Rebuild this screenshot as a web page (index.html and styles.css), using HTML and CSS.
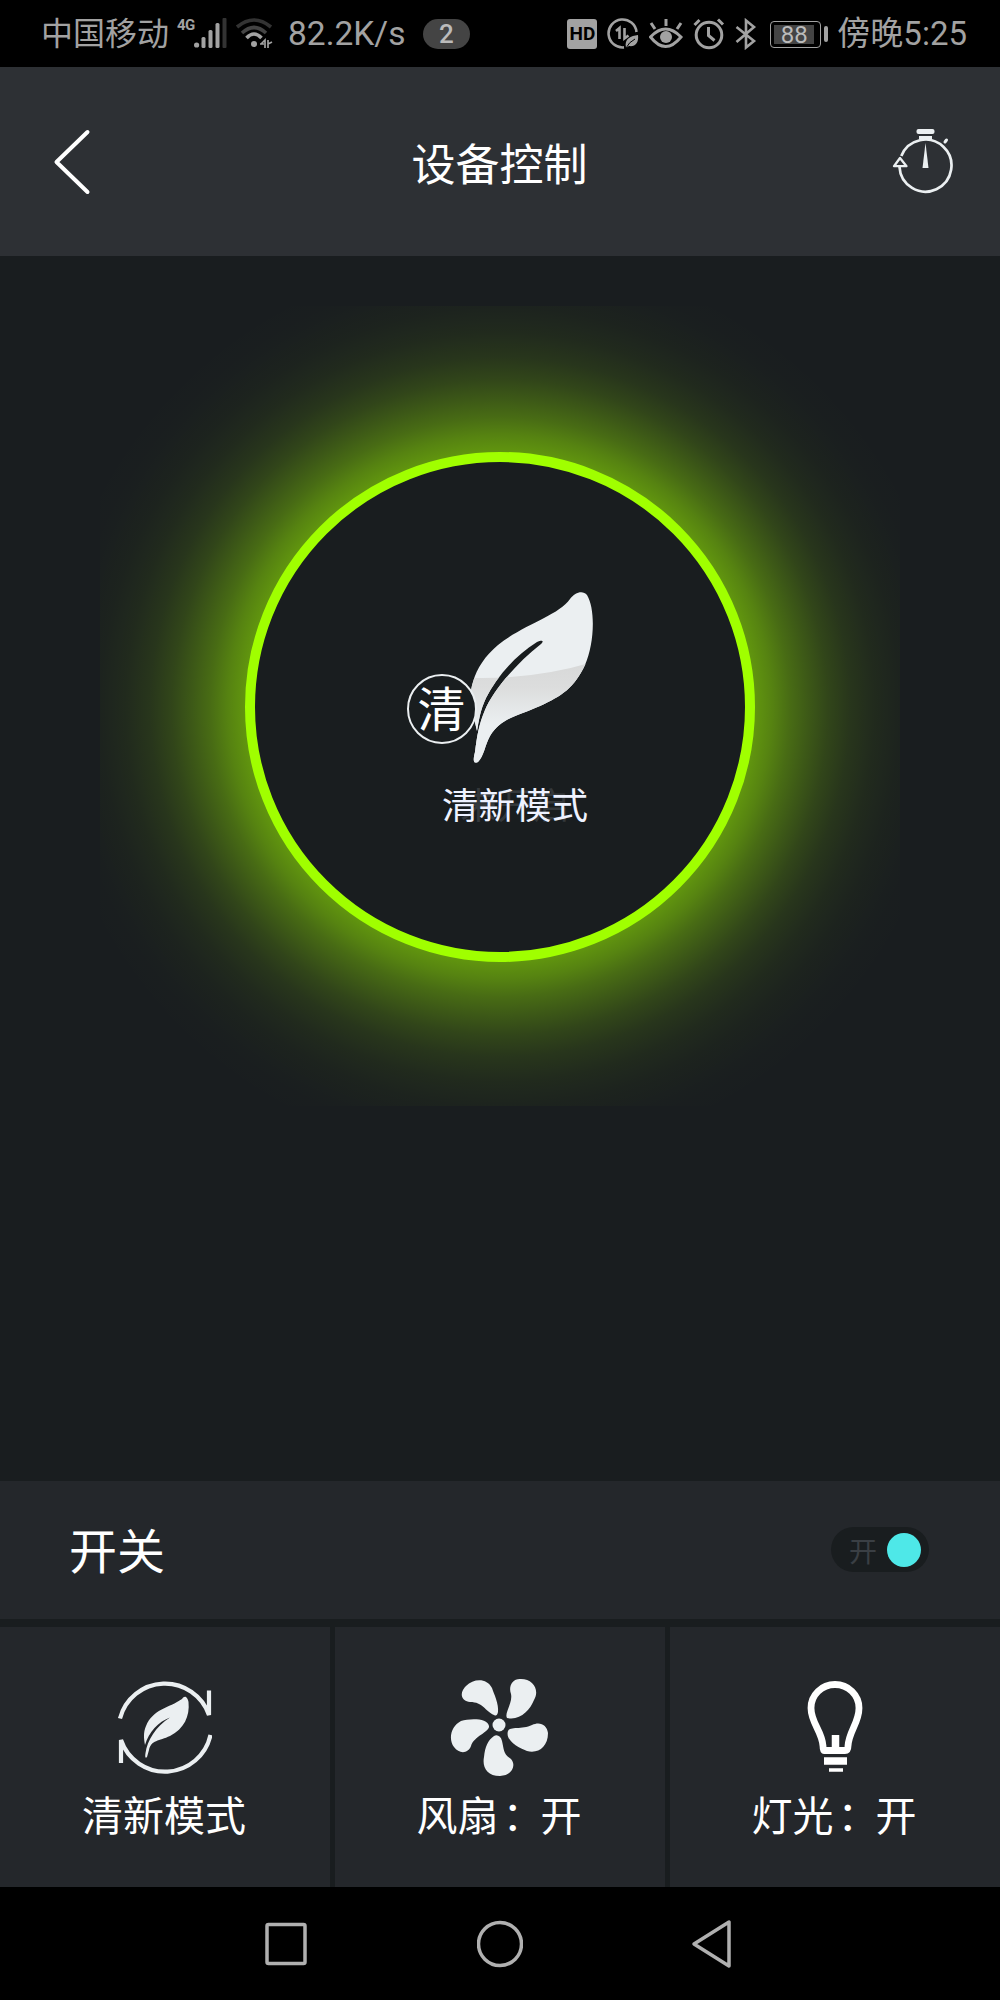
FILE: index.html
```html
<!DOCTYPE html>
<html lang="zh-CN">
  <head>
    <meta charset="UTF-8" />
    <meta name="viewport" content="width=device-width, initial-scale=1.0" />
    <title>设备控制</title>
    <link rel="stylesheet" href="styles.css">
  </head>
  <body>
    <div class="status-bar">
      <div class="status-left">
        <span class="carrier">中国移动</span>
        <span class="network">4G</span>
        <svg class="signal" width="34" height="34" viewBox="17 0 34 34" fill="#a2a2a2">
          <circle cx="19.600" cy="28" r="2.600" />
          <rect x="24.500" y="20" width="4" height="11" rx="1.500" />
          <rect x="31.500" y="13" width="4" height="18" rx="1.500" />
          <rect x="38.500" y="6" width="4" height="25" rx="1.500" />
          <rect x="45.500" y="1" width="4" height="30" rx="1" fill="#333" />
        </svg>
        <svg class="wifi" width="38" height="32" viewBox="0 0 38 32" fill="none" stroke-width="3.600">
          <path d="M2 9Q19 -5 36 9" stroke="#333" />
          <path d="M7 15Q19 4 31 15" stroke="#444" />
          <path d="M11.500 20Q19 12 26.500 20" stroke="#a2a2a2" />
          <circle cx="19" cy="26" r="3" fill="#a2a2a2" />
          <path d="M25 26h4M30 30v-8l-4 4M33 22v8M33 26l4-2" stroke="#a2a2a2" stroke-width="1.700" />
        </svg>
        <span class="speed">82.2K/s</span>
        <span class="notice-count">2</span>
      </div>
      <div class="status-right">
        <span class="hd">HD</span>
        <svg width="32" height="32" viewBox="0 0 32 32" fill="none" stroke="#a2a2a2" stroke-width="2.600">
          <path d="M29.500 14A14 14 0 1 0 17 29.400" />
          <path d="M9 13l3.500-3v11M17.500 10v10.500l4-3" />
          <path d="M19 30c-2-10 5-12 12-13c1 8-3 12-9 11z" fill="#a2a2a2" stroke="none" />
          <path d="M19 30q3-6 9-9" stroke="#000" stroke-width="1" />
        </svg>
        <svg width="34" height="32" viewBox="0 0 34 32" fill="none" stroke="#a2a2a2" stroke-width="3">
          <path d="M1.500 19Q16.500 3 32 19Q16.500 38 1.500 19z" />
          <circle cx="17" cy="19" r="6" fill="#a2a2a2" stroke="none" />
          <path d="M17 1v7M2 5l4 6M32 5l-4 6" />
        </svg>
        <svg width="32" height="32" viewBox="0 0 32 32" fill="none" stroke="#a2a2a2" stroke-width="3">
          <circle cx="16" cy="17" r="12.800" />
          <path d="M15.500 9v8.500l6 5M1.500 7l5-5M25 1.500l5 5" />
        </svg>
        <svg width="22" height="32" viewBox="0 0 22 32" fill="none" stroke="#a2a2a2" stroke-width="2.600">
          <path d="M1.500 9L19 23l-8 6.500v-27L19 9L1.500 24" />
        </svg>
        <div class="battery"><span>88</span></div>
        <span class="clock">傍晚5:25</span>
      </div>
    </div>

    <header class="header">
      <button class="icon-btn back" aria-label="返回">
        <svg width="38" height="66" viewBox="0 0 38 66" fill="none" stroke="#fff" stroke-width="4" stroke-linecap="round" stroke-linejoin="round">
          <path d="M34.500 3L3.500 33l31 30" />
        </svg>
      </button>
      <h1>设备控制</h1>
      <button class="icon-btn" aria-label="定时">
        <svg width="62" height="66" viewBox="0 0 62 66" fill="none" stroke="#ebeff1" stroke-width="2.700">
          <path d="M9.300 27A26 26 0 1 1 7.500 38" />
          <path d="M2 37.200L8 29L14.500 37.200z" stroke-width="2.300" stroke-linejoin="round" />
          <path d="M53 13l1.500-2" stroke-width="3" stroke-linecap="round" />
          <path d="M33.500 14l3 25h-6z" fill="#ebeff1" stroke="none" />
          <rect x="24.500" y="0" width="18" height="5" rx="2" fill="#ebeff1" stroke="none" />
          <rect x="27" y="7" width="13" height="3" fill="#ebeff1" stroke="none" />
        </svg>
      </button>
    </header>

    <main class="stage">
      <div class="glow">
        <div class="ring">
          <svg class="leaf" width="192" height="176" viewBox="0 0 192 176">
            <defs>
              <linearGradient id="shade" x1="0" y1="0" x2="0" y2="1">
                <stop offset="0" stop-color="#d7d8d8" />
                <stop offset="0.250" stop-color="#dcdddd" />
                <stop offset="0.600" stop-color="#ebeff1" />
              </linearGradient>
              <clipPath id="leafShape">
                <path d="M129 171C124 173 124 169 126 161C128 145 130 133 136 119C143 102 165 74 192 53C196 49 192 49 188 51C164 66 147 88 137 107C131 120 130 129 128 140C124 122 119 105 124 91C128 77 136 65 149 54C175 33 209 25 221 8C226 1 234 -1 238 4C247 19 245 54 236 74C225 97 213 105 191 115C166 126 152 127 141 145C136 154 135 165 129 171z" transform="translate(-55 0)" />
              </clipPath>
            </defs>
            <g clip-path="url(#leafShape)">
              <rect x="50" y="0" width="142" height="176" fill="#ebeff1" />
              <path d="M50 86Q124 91 192 70V176H50z" fill="url(#shade)" />
            </g>
            <circle cx="38" cy="118" r="34" fill="#191d1f" stroke="#ebeff1" stroke-width="2" />
            <text x="37.500" y="135.500" class="badge-text">清</text>
          </svg>
          <div class="mode">
            <span class="mode-prev">未开启</span>
            <span class="mode-name">清新模式</span>
          </div>
        </div>
      </div>
    </main>

    <section class="power">
      <span class="power-label">开关</span>
      <div class="toggle">
        <span>开</span>
        <i class="knob"></i>
      </div>
    </section>

    <section class="tiles">
      <div class="tile">
        <svg width="96" height="98" viewBox="-1 0 96 98" fill="none" stroke="#ebeff1" stroke-width="4.200">
          <path d="M3 40.500A46.500 46.500 0 0 1 92 37V12.500" />
          <path d="M93.500 57A46.500 46.500 0 0 1 4 62V85" />
          <path d="M30 79C28 81 28 78 28.500 75C30 63 39 48 53 39.500C41 44 32 54 28 67C27 61 26 55 29 48C36 31 52 30 65 21C68 16 71 20 71.500 24C73 38 67 51 53 58C42 63 34 62 32 72z" fill="#ebeff1" stroke="none" />
        </svg>
        <span>清新模式</span>
      </div>
      <div class="tile">
        <svg width="98" height="98" viewBox="0 0 98 98" fill="#ebeff1">
          <circle cx="49" cy="47" r="6.500" />
          <path d="M44 37C35 33 33 24 20 24C11 23 9 15 16 8C24 0 37 0 42 10C44 16 49 26 48 34C47 38 46 38 44 37z" />
          <path d="M57 40C54 35 63 25 61 16C58 8 63 0 71 1C83 1 90 12 84 22C80 32 70 43 57 40z" />
          <path d="M58 53C60 48 72 52 82 47C90 43 97 47 98 55C98 69 88 76 77 73C68 70 55 62 58 53z" />
          <path d="M44 58C47 56 51 58 52 63C54 71 53 76 61 81C67 88 61 98 50 98C37 98 32 89 34 79C35 69 38 62 44 58z" />
          <path d="M39 48C40 54 24 58 21 68C18 76 9 76 4 69C-2 61 1 48 11 43C20 40 38 40 39 48z" />
        </svg>
        <span>风扇<i class="colon">：</i>开</span>
      </div>
      <div class="tile">
        <svg width="58" height="98" viewBox="-1 -3 58 98" fill="none" stroke="#fff">
          <path d="M18 69.500H39Q42 69.500 42 65C43 50 53 42 53 27A24 23.500 0 0 0 5 27C5 42 16 50 17 65Q17 69.500 18 69.500z" stroke-width="6.800" />
          <path d="M29.500 54v15" stroke-width="7.500" />
          <path d="M18 80h23" stroke-width="7.500" />
          <path d="M23 89h14" stroke-width="3.500" />
        </svg>
        <span>灯光<i class="colon">：</i>开</span>
      </div>
    </section>

    <nav class="nav-bar">
      <svg width="46" height="46" viewBox="0 0 46 46"><rect x="4" y="3.500" width="38" height="39" rx="1.500" /></svg>
      <svg width="46" height="50" viewBox="0 0 46 50"><circle cx="23" cy="25" r="21.500" /></svg>
      <svg width="46" height="50" viewBox="0 0 46 50"><path d="M38 3v44L3 25z" stroke-linejoin="round" /></svg>
    </nav>
  </body>
</html>
```
FILE: styles.css
```css
* {
  box-sizing: border-box;
}

body {
  margin: 0;
  width: 1000px;
  height: 2000px;
  display: flex;
  flex-direction: column;
  background: #191d1f;
  color: #fff;
  font-family: Roboto, "Noto Sans CJK SC", sans-serif;
}

svg {
  display: block;
  flex: none;
}

.status-bar {
  height: 67px;
  padding: 1px 33px 0 41px;
  background: #000;
  color: #a2a2a2;
  display: flex;
  justify-content: space-between;
  align-items: center;
  font-size: 33px;
  line-height: 66px;
  white-space: nowrap;
}

.status-left,
.status-right {
  display: flex;
  align-items: center;
}

.carrier {
  width: 136px;
  font-size: 32px;
}

.network {
  width: 17px;
  margin-bottom: 18px;
  font-size: 15px;
  font-weight: bold;
  letter-spacing: -0.5px;
  line-height: 18px;
}

.wifi {
  margin-left: 7px;
}

.speed {
  margin-left: 15px;
  width: 118px;
  font-size: 33.5px;
}

.notice-count {
  margin-left: 17px;
  width: 47px;
  height: 30px;
  border-radius: 15px;
  background: #444;
  color: #bbb;
  font-size: 26px;
  font-weight: 500;
  line-height: 31px;
  text-align: center;
}

.status-right {
  gap: 10px;
}

.hd {
  width: 30px;
  height: 30px;
  border-radius: 3px;
  background: #a2a2a2;
  color: #000;
  font-size: 19px;
  font-weight: bold;
  line-height: 30px;
  text-align: center;
}

.battery {
  position: relative;
  width: 51px;
  height: 27px;
  margin: 0 6px 0 3px;
  padding: 3px 6px 3px 3px;
  border: 1.5px solid #a2a2a2;
  border-radius: 4px;
}

.battery::after {
  content: "";
  position: absolute;
  right: -8px;
  top: 4px;
  width: 4px;
  height: 16px;
  border-radius: 2px;
  background: #a2a2a2;
}

.battery span {
  display: block;
  height: 19px;
  background: #444;
  color: #bbb;
  font-size: 24px;
  line-height: 20px;
  text-align: center;
}

.header {
  height: 189px;
  padding: 0 46px 0 53px;
  background: #2d3034;
  display: flex;
  justify-content: space-between;
  align-items: center;
}

.header h1 {
  margin: 0;
  font-size: 44px;
  font-weight: 400;
}

.icon-btn {
  width: 62px;
  padding: 0;
  border: none;
  background: none;
}

.back {
  width: 54px;
}

.stage {
  height: 1225px;
  padding-top: 50px;
}

.glow {
  width: 800px;
  height: 800px;
  margin: 0 auto;
  padding-top: 2px;
  background: radial-gradient(
    circle 460px at 50% 401px,
    rgba(160, 255, 0, 0.54) 253px,
    rgba(160, 255, 0, 0.45) 272px,
    rgba(160, 255, 0, 0.35) 290px,
    rgba(160, 255, 0, 0.265) 308px,
    rgba(160, 255, 0, 0.18) 328px,
    rgba(160, 255, 0, 0.11) 350px,
    rgba(160, 255, 0, 0.06) 375px,
    rgba(160, 255, 0, 0.027) 400px,
    rgba(160, 255, 0, 0.008) 430px,
    rgba(160, 255, 0, 0) 460px
  );
  display: flex;
  justify-content: center;
  align-items: center;
}

.ring {
  width: 510px;
  height: 510px;
  border: 10px solid #a0ff00;
  border-radius: 50%;
  background: #191d1f;
  display: flex;
  flex-direction: column;
  align-items: center;
  padding-top: 129px;
}

.badge-text {
  fill: #fff;
  font-size: 48px;
  text-anchor: middle;
}

.mode {
  display: grid;
  margin: 13px 0 0 30px;
  font-size: 36.5px;
  line-height: 54px;
}

.mode span {
  grid-area: 1 / 1;
  text-align: center;
}

.mode-prev {
  color: #34383b;
}

.mode-name {
  color: #eef2ff;
}

.power {
  height: 138px;
  padding: 0 71px 1px 69px;
  background: #24272b;
  display: flex;
  justify-content: space-between;
  align-items: center;
}

.power-label {
  margin-top: -3px;
  font-size: 48px;
}

.toggle {
  width: 98px;
  height: 45px;
  padding: 0 8px 0 18px;
  border-radius: 23px;
  background: #191d1f;
  color: #3a3f44;
  display: flex;
  justify-content: space-between;
  align-items: center;
  font-size: 28px;
}

.knob {
  width: 34px;
  height: 34px;
  border-radius: 50%;
  background: #4ee8e8;
}

.tiles {
  height: 260px;
  margin-top: 8px;
  display: grid;
  grid-template-columns: repeat(3, 1fr);
  gap: 5px;
}

.tile {
  padding: 51px 2px 0 0;
  background: #24272b;
  display: flex;
  flex-direction: column;
  align-items: center;
  font-size: 41px;
}

.tile span {
  margin-top: 11px;
  line-height: 60px;
}

.colon {
  display: inline-block;
  width: 42px;
  font-style: normal;
  text-indent: 4px;
}

.nav-bar {
  height: 113px;
  background: #000;
  display: flex;
  justify-content: center;
  align-items: center;
  gap: 168px;
}

.nav-bar svg {
  fill: none;
  stroke: #b0b0b0;
  stroke-width: 3.5;
}
```
